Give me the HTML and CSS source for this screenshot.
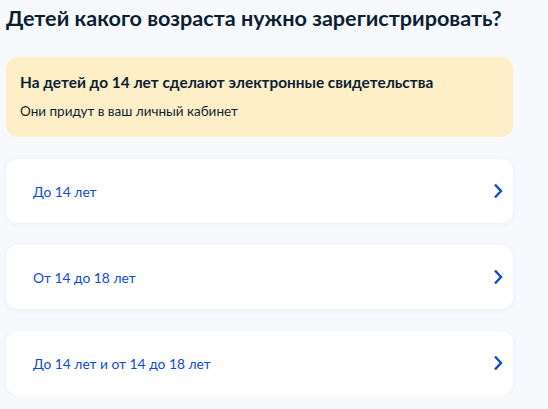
FILE: index.html
```html
<!DOCTYPE html>
<html lang="ru">
<head>
    <meta charset="UTF-8">
    <title>Регистрация рождения</title>
    <link rel="stylesheet" href="styles.css">
</head>
<body>
<div class="page">
    <h1 class="title">Детей какого возраста нужно зарегистрировать?</h1>

    <div class="notice">
        <div class="notice-title">На детей до 14 лет сделают электронные свидетельства</div>
        <div class="notice-text">Они придут в ваш личный кабинет</div>
    </div>

    <div class="options">
        <a class="option" href="#">
            <span>До 14 лет</span>
            <svg class="arrow" width="10" height="16" viewBox="0 0 10 16"><path d="M2 1.5l6 6.5-6 6.5" fill="none" stroke="#0d4cd3" stroke-width="2.4"/></svg>
        </a>
        <a class="option" href="#">
            <span>От 14 до 18 лет</span>
            <svg class="arrow" width="10" height="16" viewBox="0 0 10 16"><path d="M2 1.5l6 6.5-6 6.5" fill="none" stroke="#0d4cd3" stroke-width="2.4"/></svg>
        </a>
        <a class="option" href="#">
            <span>До 14 лет и от 14 до 18 лет</span>
            <svg class="arrow" width="10" height="16" viewBox="0 0 10 16"><path d="M2 1.5l6 6.5-6 6.5" fill="none" stroke="#0d4cd3" stroke-width="2.4"/></svg>
        </a>
    </div>
</div>
</body>
</html>
```

FILE: styles.css
```css
* {
    margin: 0;
    padding: 0;
    box-sizing: border-box;
}

body {
    background-color: #f8f9fd;
    font-family: Lato, "Noto Sans", sans-serif;
    color: #0b1f33;
}

.page {
    width: 507px;
    margin-left: 6px;
}

.title {
    font-size: 21.6px;
    font-weight: 700;
    line-height: 32px;
    margin-top: 2px;
    white-space: nowrap;
}

.notice {
    margin-top: 23px;
    padding: 14px 14px 16px;
    background-color: #feefc9;
    border-radius: 12px;
}

.notice-title {
    font-size: 15.4px;
    font-weight: 700;
    line-height: 22px;
}

.notice-text {
    margin-top: 8px;
    font-size: 13.5px;
    line-height: 20px;
}

.options {
    display: flex;
    flex-direction: column;
    gap: 22px;
    margin-top: 22px;
}

.option {
    display: flex;
    align-items: center;
    justify-content: space-between;
    height: 64px;
    padding: 0 10px 0 27px;
    background-color: #fff;
    border-radius: 12px;
    box-shadow: 0 1px 4px rgba(228, 236, 253, 0.9);
    color: #0d4cd3;
    font-size: 13.8px;
    text-decoration: none;
}
```
